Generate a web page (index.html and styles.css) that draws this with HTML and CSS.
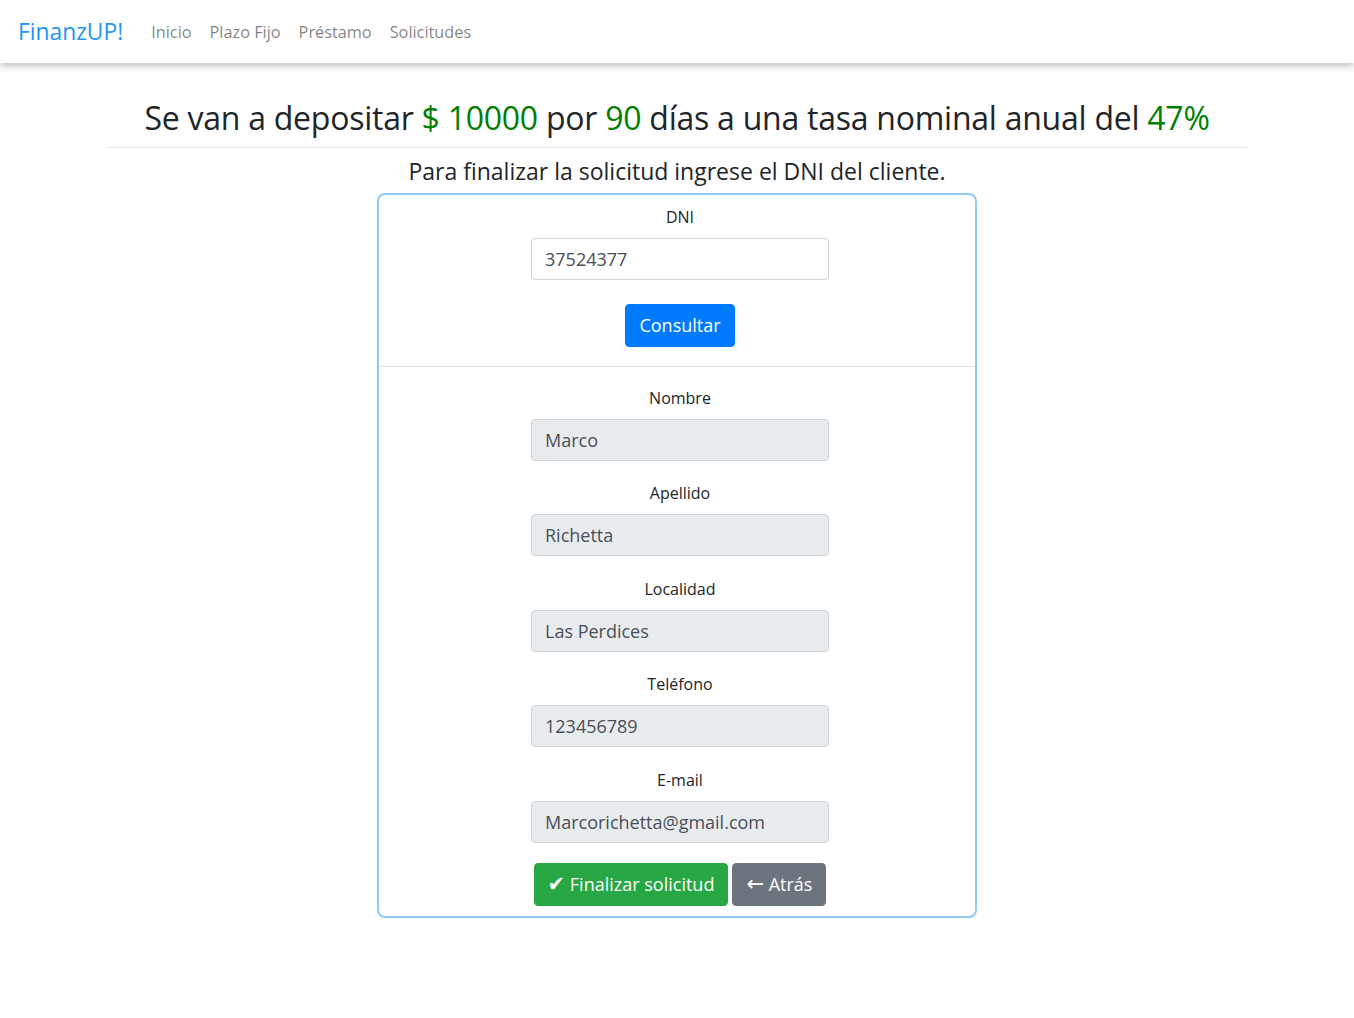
FILE: index.html
```html
<!DOCTYPE html>
<html lang="es">
<head>
<meta charset="utf-8">
<title>FinanzUP!</title>
<link rel="stylesheet" href="styles.css">
</head>
<body>
<nav class="navbar">
  <a class="brand" href="#">FinanzUP!</a>
  <ul class="nav">
    <li><a href="#">Inicio</a></li>
    <li><a href="#">Plazo Fijo</a></li>
    <li><a href="#">Préstamo</a></li>
    <li><a href="#">Solicitudes</a></li>
  </ul>
</nav>
<main class="container">
  <h2 class="title">Se van a depositar <span class="hl">$ 10000</span> por <span class="hl">90</span> días a una tasa nominal anual del <span class="hl">47%</span></h2>
  <hr class="sep">
  <h4 class="subtitle">Para finalizar la solicitud ingrese el DNI del cliente.</h4>
  <div class="card">
    <div class="section top">
      <div class="group">
        <label class="label">DNI</label>
        <input class="control" type="text" value="37524377">
      </div>
      <button class="btn btn-primary">Consultar</button>
    </div>
    <div class="section bottom">
      <div class="group">
        <label class="label">Nombre</label>
        <input class="control" type="text" value="Marco" disabled>
      </div>
      <div class="group">
        <label class="label">Apellido</label>
        <input class="control" type="text" value="Richetta" disabled>
      </div>
      <div class="group">
        <label class="label">Localidad</label>
        <input class="control" type="text" value="Las Perdices" disabled>
      </div>
      <div class="group">
        <label class="label">Teléfono</label>
        <input class="control" type="text" value="123456789" disabled>
      </div>
      <div class="group">
        <label class="label">E-mail</label>
        <input class="control" type="text" value="Marcorichetta@gmail.com" disabled>
      </div>
      <div class="actions">
        <button class="btn btn-success"><span class="sym">✔</span> Finalizar solicitud</button>
        <button class="btn btn-secondary"><span class="sym">←</span> Atrás</button>
      </div>
    </div>
  </div>
</main>
</body>
</html>
```

FILE: styles.css
```css
* { box-sizing: border-box; }
html, body { margin: 0; padding: 0; }
body {
  font-family: "Open Sans", "Noto Sans", sans-serif;
  color: #212529;
  background: #fff;
  font-size: 16px;
  line-height: 1.5;
}
.navbar {
  height: 63px;
  display: flex;
  align-items: center;
  padding: 0 18px;
  background: #fff;
  box-shadow: 0 2px 8px rgba(0,0,0,0.3);
}
.brand {
  color: #2196f3;
  font-size: 22.8px;
  text-decoration: none;
  margin-right: 19px;
  padding-top: 1px;
}
.nav {
  list-style: none;
  margin: 0;
  padding: 0;
  display: flex;
}
.nav li a {
  display: block;
  padding: 10px 9px 8px;
  color: rgba(0,0,0,0.5);
  text-decoration: none;
  font-size: 16.3px;
}
.container {
  width: 1140px;
  margin: 0 auto;
  padding-top: 36px;
}
.title {
  margin: 0;
  text-align: center;
  font-weight: 400;
  font-size: 32px;
  letter-spacing: -0.25px;
  line-height: 1.2;
}
.hl { color: #008000; }
.sep {
  border: 0;
  border-top: 1px solid rgba(0,0,0,0.1);
  margin: 10px 0 10px;
}
.subtitle {
  margin: 0 0 7px;
  text-align: center;
  font-weight: 400;
  font-size: 23px;
  line-height: 1.2;
}
.card {
  width: 600px;
  margin: 0 auto;
  border: 2px solid #90caf9;
  border-radius: 8px;
}
.section {
  display: flex;
  flex-direction: column;
  align-items: center;
  padding-left: 6px;
}
.top {
  padding-top: 10px;
  padding-bottom: 19px;
  border-bottom: 1px solid #dee2e6;
}
.bottom {
  padding-top: 19px;
  padding-bottom: 10px;
}
.group {
  display: flex;
  flex-direction: column;
  align-items: center;
  margin-bottom: 20.5px;
}
.top .group { margin-bottom: 24px; }
.label {
  font-size: 16px;
  line-height: 24px;
  margin-bottom: 9px;
}
.control {
  width: 298px;
  height: 42px;
  padding: 0 13px;
  font-family: inherit;
  font-size: 18px;
  color: #495057;
  border: 1px solid #ced4da;
  border-radius: 4px;
  background: #fff;
}
.control:disabled {
  background: #e9ecef;
  color: #495057;
  opacity: 1;
}
.btn {
  font-family: inherit;
  font-size: 18px;
  line-height: 27px;
  height: 43px;
  padding: 0 13px;
  border: 1px solid transparent;
  border-radius: 4px;
  color: #fff;
  cursor: pointer;
}
.sym {
  font-family: "DejaVu Sans", sans-serif;
  font-size: 21px;
  line-height: 1;
}
.btn-primary { background: #007bff; border-color: #007bff; }
.btn-success { background: #28a745; border-color: #28a745; }
.btn-secondary { background: #6c757d; border-color: #6c757d; }
.actions {
  display: flex;
  gap: 4px;
  margin-top: -0.5px;
}
```
